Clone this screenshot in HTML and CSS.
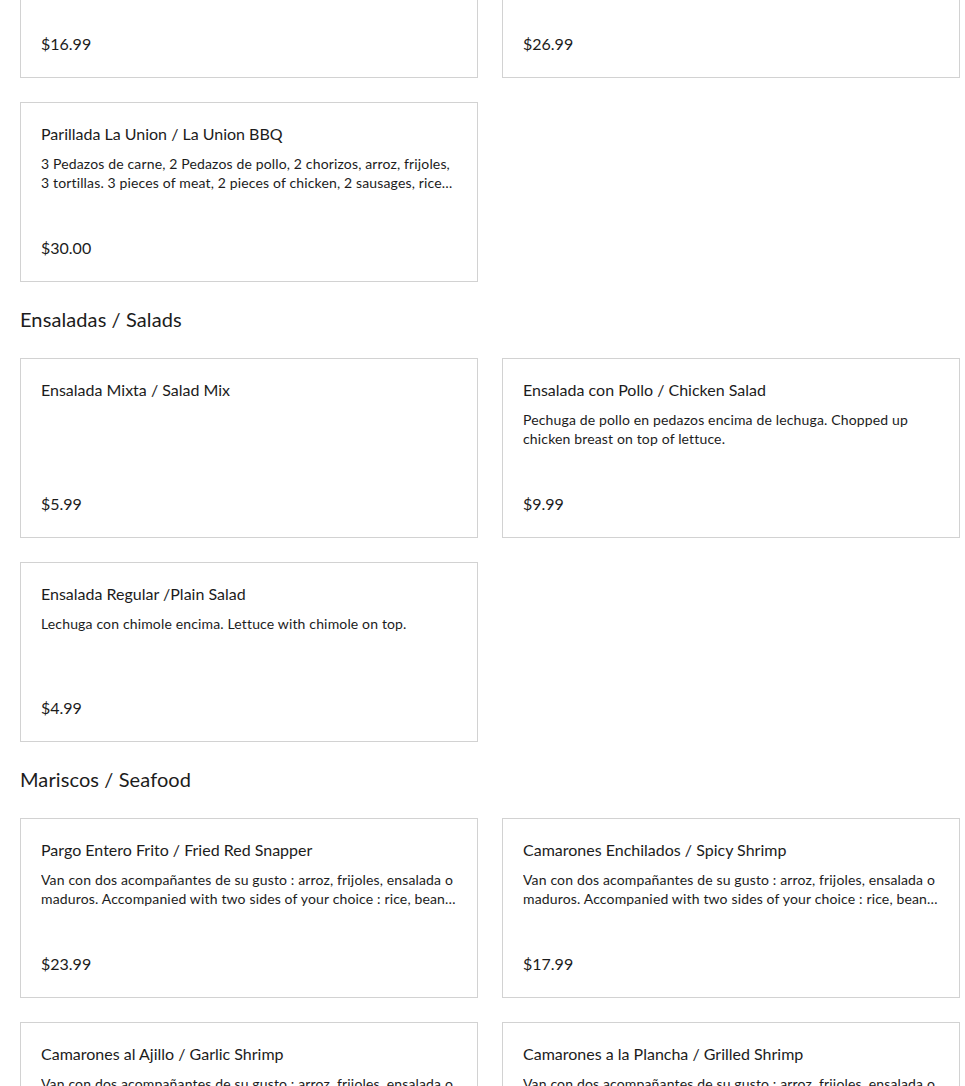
FILE: index.html
```html
<!DOCTYPE html>
<html lang="es">
<head>
  <meta charset="UTF-8">
  <title>Menú</title>
  <link rel="stylesheet" href="styles.css">
</head>
<body>
  <main class="menu">

    <section class="seccion seccion-primera">
      <div class="platos">
        <div class="plato">
          <h3 class="plato-nombre">Parillada Sencilla / Single BBQ</h3>
          <p class="plato-desc">Carne asada con arroz, frijoles y tortillas. Grilled steak with rice, beans and tortillas.</p>
          <span class="plato-precio">$16.99</span>
        </div>
        <div class="plato">
          <h3 class="plato-nombre">Parillada Familiar / Family BBQ</h3>
          <p class="plato-desc">Carne, pollo, chorizo, arroz, frijoles y tortillas. Meat, chicken, sausage, rice, beans and tortillas.</p>
          <span class="plato-precio">$26.99</span>
        </div>
        <div class="plato">
          <h3 class="plato-nombre">Parillada La Union / La Union BBQ</h3>
          <p class="plato-desc">3 Pedazos de carne, 2 Pedazos de pollo, 2 chorizos, arroz, frijoles, 3 tortillas. 3 pieces of meat, 2 pieces of chicken, 2 sausages, rice and beans, 3 tortillas.</p>
          <span class="plato-precio">$30.00</span>
        </div>
      </div>
    </section>

    <section class="seccion">
      <h2 class="seccion-titulo">Ensaladas / Salads</h2>
      <div class="platos">
        <div class="plato">
          <h3 class="plato-nombre">Ensalada Mixta / Salad Mix</h3>
          <p class="plato-desc"></p>
          <span class="plato-precio">$5.99</span>
        </div>
        <div class="plato">
          <h3 class="plato-nombre">Ensalada con Pollo / Chicken Salad</h3>
          <p class="plato-desc">Pechuga de pollo en pedazos encima de lechuga. Chopped up chicken breast on top of lettuce.</p>
          <span class="plato-precio">$9.99</span>
        </div>
        <div class="plato">
          <h3 class="plato-nombre">Ensalada Regular /Plain Salad</h3>
          <p class="plato-desc">Lechuga con chimole encima. Lettuce with chimole on top.</p>
          <span class="plato-precio">$4.99</span>
        </div>
      </div>
    </section>

    <section class="seccion">
      <h2 class="seccion-titulo">Mariscos / Seafood</h2>
      <div class="platos">
        <div class="plato">
          <h3 class="plato-nombre">Pargo Entero Frito / Fried Red Snapper</h3>
          <p class="plato-desc">Van con dos acompañantes de su gusto : arroz, frijoles, ensalada o maduros. Accompanied with two sides of your choice : rice, beans, salad or sweet plantains.</p>
          <span class="plato-precio">$23.99</span>
        </div>
        <div class="plato">
          <h3 class="plato-nombre">Camarones Enchilados / Spicy Shrimp</h3>
          <p class="plato-desc">Van con dos acompañantes de su gusto : arroz, frijoles, ensalada o maduros. Accompanied with two sides of your choice : rice, beans, salad or sweet plantains.</p>
          <span class="plato-precio">$17.99</span>
        </div>
        <div class="plato">
          <h3 class="plato-nombre">Camarones al Ajillo / Garlic Shrimp</h3>
          <p class="plato-desc">Van con dos acompañantes de su gusto : arroz, frijoles, ensalada o maduros. Accompanied with two sides of your choice : rice, beans, salad or sweet plantains.</p>
          <span class="plato-precio">$16.99</span>
        </div>
        <div class="plato">
          <h3 class="plato-nombre">Camarones a la Plancha / Grilled Shrimp</h3>
          <p class="plato-desc">Van con dos acompañantes de su gusto : arroz, frijoles, ensalada o maduros. Accompanied with two sides of your choice : rice, beans, salad or sweet plantains.</p>
          <span class="plato-precio">$16.99</span>
        </div>
      </div>
    </section>

  </main>
</body>
</html>
```

FILE: styles.css
```css
body {
  margin: 0;
  font-family: Lato, "Liberation Sans", sans-serif;
  color: #1c1c1c;
  background-color: white;
}
.menu {
  width: 940px;
  padding-left: 20px;
}
.seccion-primera {
  margin-top: -102px;
}
.seccion-titulo {
  margin: 22px 0 24px;
  font-size: 20px;
  font-weight: normal;
  line-height: 30px;
  letter-spacing: 0.1px;
}
.platos {
  display: grid;
  grid-template-columns: 1fr 1fr;
  gap: 24px;
}
.plato {
  box-sizing: border-box;
  height: 180px;
  border: 1px solid #d2d2d2;
  padding: 19px 20px 21px;
  display: flex;
  flex-direction: column;
}
.plato-nombre {
  margin: 0;
  font-size: 16px;
  font-weight: normal;
  line-height: 24px;
}
.plato-desc {
  margin: 8px 0 0;
  font-size: 14px;
  line-height: 19px;
  letter-spacing: 0.15px;
  display: -webkit-box;
  -webkit-line-clamp: 2;
  -webkit-box-orient: vertical;
  overflow: hidden;
}
.plato-precio {
  margin-top: auto;
  font-size: 16px;
  line-height: 24px;
}
```
